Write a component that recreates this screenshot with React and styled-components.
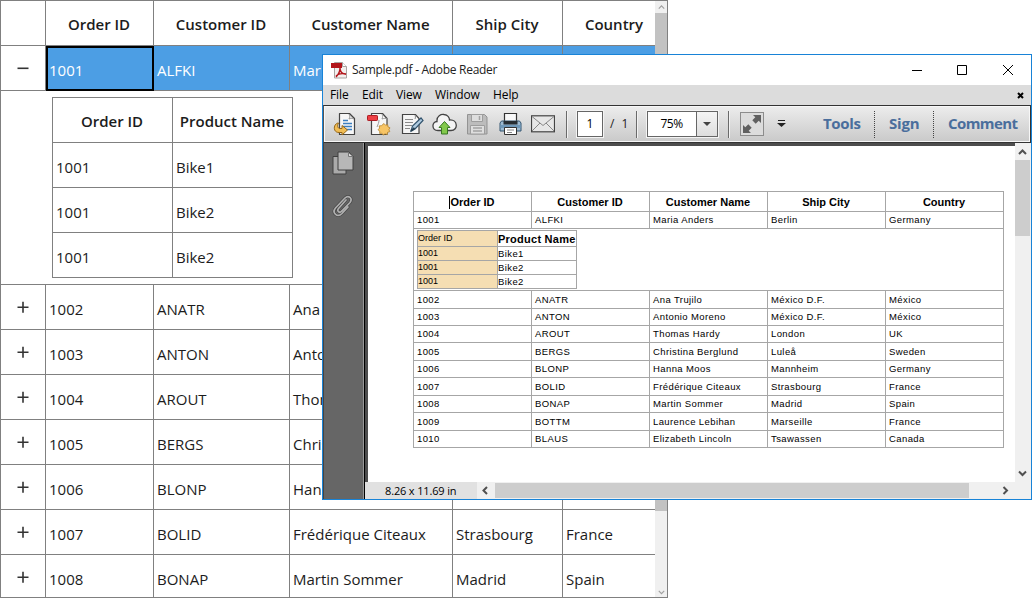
import React from 'react';
import styled, { createGlobalStyle } from 'styled-components';

const Global = createGlobalStyle`
  * { box-sizing: border-box; }
  body { margin: 0; background: #fff; overflow: hidden; }
`;

const Screen = styled.div`
  position: relative;
  width: 1032px;
  height: 598px;
  overflow: hidden;
  font-family: 'Open Sans', sans-serif;
  color: #1c1c1c;
  white-space: nowrap;
`;

const Label = styled.span`
  display: block;
  line-height: 1.15;
  letter-spacing: ${(p) => p.$ls || 0}px;
`;

/* ---------- Data grid ---------- */

const Grid = styled.section`
  display: flex;
  width: 668px;
  height: 598px;
  border: 1px solid #808080;
`;

const GridBody = styled.div`
  width: 654px;
  height: 596px;
  overflow: hidden;
`;

const GridRow = styled.div`
  display: grid;
  grid-template-columns: 45px 108px 136px 163px 110px 92px;
  height: 45px;
`;

const GridCell = styled.div`
  display: flex;
  align-items: center;
  padding: 6px 0 0 3px;
  border-right: 1px solid #808080;
  border-bottom: 1px solid #808080;
  overflow: hidden;
  font-size: 15px;
  background: ${(p) => (p.$selected ? '#4c9ee4' : '#fff')};
  color: ${(p) => (p.$selected ? '#fff' : '#1c1c1c')};
  &:last-child { border-right-width: ${(p) => (p.$nested ? 1 : 0)}px; }
`;

const FocusCell = styled(GridCell)`
  padding: 5px 0 0 1px;
  border: 2px solid #000;
`;

const HeadCell = styled(GridCell)`
  justify-content: center;
  padding: 4px 1px 0 ${(p) => p.$shift || 0}px;
  font-weight: 600;
`;

const ToggleCell = styled(GridCell)`
  justify-content: center;
  padding: 0 1px 0 0;
`;

const Detail = styled.div`
  height: 194px;
  padding: 6px 0 0 51px;
  border-bottom: 1px solid #808080;
`;

const NestedGrid = styled.div`
  width: 241px;
  border: 1px solid #808080;
  border-width: 1px 0 0 1px;
`;

const NestedRow = styled.div`
  display: grid;
  grid-template-columns: 120px 120px;
  height: 45px;
`;

const GridScroll = styled.div`
  display: flex;
  flex-direction: column;
  align-items: center;
  justify-content: space-between;
  width: 12px;
  background: #f0f0f0;
  padding: 3px 0 1px;
`;

const GridThumb = styled.div`
  width: 12px;
  height: 498px;
  margin: 2px 0 auto;
  background: #c2c2c2;
`;

/* ---------- Reader window ---------- */

const Window = styled.section`
  position: absolute;
  left: 322px;
  top: 54px;
  width: 710px;
  height: 446px;
  display: flex;
  flex-direction: column;
  border: 1px solid #1883d7;
  background: #fff;
`;

const TitleBar = styled.header`
  display: flex;
  align-items: center;
  height: 30px;
  padding: 0 17px 0 8px;
  font-size: 12px;
  color: #222;
`;

const Title = styled(Label)`
  flex: 1;
  padding: 0 0 0 4px;
`;

const WindowButtons = styled.div`
  display: flex;
  gap: 34px;
`;

const MenuBar = styled.nav`
  display: grid;
  grid-template-columns: 32px 34px 39px 58px 1fr 9px;
  align-items: center;
  height: 20px;
  padding: 0 5px 0 7px;
  background: #dcdcdc;
  font-size: 12px;
  color: #000;
`;

const Toolbar = styled.div`
  display: grid;
  grid-template-columns: 34px 34px 31px 35px 32px 32px 35px 11px 26px 33px 11px 81px 12px 37px 46px 51px 59px 1fr;
  align-items: center;
  height: 38px;
  padding-left: 9px;
  border: 1px solid #333;
  border-left-color: #555;
  box-shadow: inset 0 0 0 1px #f7f7f7;
  background: linear-gradient(#ededed, #c9c9c9);
`;

const Separator = styled.i`
  width: 2px;
  height: 27px;
  border-left: 1px solid #6a6a6a;
  border-right: 1px solid #f2f2f2;
`;

const PageInput = styled.div`
  display: flex;
  align-items: center;
  justify-content: center;
  width: 26px;
  height: 26px;
  border: 1px solid #666;
  outline: 1px solid #f4f4f4;
  background: #fff;
  font-size: 12px;
  color: #000;
`;

const PageTotal = styled.div`
  display: flex;
  gap: 7px;
  padding-left: 7px;
  font-size: 12px;
  color: #222;
`;

const ZoomBox = styled.div`
  display: grid;
  grid-template-columns: 48px 21px;
  width: 71px;
  height: 26px;
  border: 1px solid #666;
  outline: 1px solid #f4f4f4;
  background: #fff;
`;

const ZoomValue = styled.span`
  align-self: center;
  padding: 0 1px 1px 0;
  text-align: center;
  font-size: 12px;
  letter-spacing: -0.5px;
  color: #000;
`;

const ZoomArrow = styled.span`
  display: flex;
  align-items: center;
  justify-content: center;
  border-left: 1px solid #666;
  background: linear-gradient(#f5f5f5, #dedede);
`;

const Pane = styled.div`
  display: flex;
  align-items: center;
  height: 27px;
  padding: 0 0 1px ${(p) => p.$pad || 0}px;
  border-left: ${(p) => (p.$pad ? '1px dotted #444' : '0')};
  font-size: 15px;
  font-weight: 700;
  color: #4a6e9c;
`;

const Main = styled.div`
  flex: 1;
  display: flex;
  min-height: 0;
`;

const Sidebar = styled.aside`
  display: flex;
  flex-direction: column;
  align-items: center;
  gap: 19px;
  width: 42px;
  padding: 8px 3px 0 0;
  border-left: 1px solid #444;
  border-right: 1px solid #000;
  background: #666;
  box-shadow: inset -1px 0 #999;
`;

const Viewer = styled.div`
  flex: 1;
  display: flex;
  flex-direction: column;
`;

const DocArea = styled.div`
  flex: 1;
  display: flex;
`;

const Page = styled.div`
  flex: 1;
  border: 3px solid #4d4d4d;
  border-width: 3px 0 0 3px;
  padding: 45px 0 0 45px;
  background: #fff;
`;

const VScroll = styled.div`
  display: flex;
  flex-direction: column;
  align-items: center;
  width: 16px;
  padding: 5px 1px 4px 0;
  background: #f0f0f0;
`;

const VThumb = styled.div`
  width: 15px;
  height: 76px;
  margin: 3px 0 auto;
  background: #cdcdcd;
`;

const StatusBar = styled.footer`
  display: flex;
  align-items: center;
  height: 17px;
  background: #f0f0f0;
`;

const PageSize = styled.div`
  display: flex;
  align-items: center;
  width: 112px;
  height: 17px;
  margin-right: 4px;
  padding: 2px 0 0 20px;
  background: #e1e1e1;
  font-size: 11px;
  color: #000;
`;

const HThumb = styled.div`
  width: 474px;
  height: 15px;
  margin: 0 32px 0 5px;
  background: #cdcdcd;
`;

const PdfTable = styled.div`
  width: 591px;
  border: 1px solid #a6a6a6;
  border-width: 1px 0 0 1px;
  font-family: 'Liberation Sans', sans-serif;
  color: #000;
`;

const PdfRow = styled.div`
  display: grid;
  grid-template-columns: repeat(5, 118px);
  height: ${(p) => p.$h}px;
`;

const PdfCell = styled.div`
  display: flex;
  align-items: center;
  justify-content: ${(p) => (p.$head ? 'center' : 'flex-start')};
  padding: ${(p) => (p.$head ? '1px 1px 0 0' : '1px 0 0 3px')};
  border-right: 1px solid #a6a6a6;
  border-bottom: 1px solid #a6a6a6;
  font-size: ${(p) => (p.$head ? 11 : 9.5)}px;
  font-weight: ${(p) => (p.$head ? 700 : 400)};
`;

const PdfDetail = styled.div`
  height: 62px;
  padding: 1px 0 0 3px;
  border-right: 1px solid #a6a6a6;
  border-bottom: 1px solid #a6a6a6;
`;

const PdfNested = styled.div`
  width: 160px;
  border: 1px solid #a6a6a6;
  border-width: 1px 0 0 1px;
`;

const PdfNestedRow = styled.div`
  display: grid;
  grid-template-columns: 80px 79px;
  height: ${(p) => p.$h}px;
`;

const PdfNestedCell = styled.div`
  display: flex;
  align-items: center;
  padding: ${(p) => (p.$head ? '1px 0 0 0' : p.$key ? '0 0 1px 0' : '2px 0 0 0')};
  border-right: 1px solid #a6a6a6;
  border-bottom: 1px solid #a6a6a6;
  background: ${(p) => (p.$key ? '#f5deb3' : '#fff')};
  font-size: ${(p) => (p.$head ? 11 : p.$key ? 9 : 9.5)}px;
  font-weight: ${(p) => (p.$head ? 700 : 400)};
`;

const HeadFirst = styled.span`
  border-left: 1px solid #000;
  line-height: 13px;
`;

/* ---------- Icons ---------- */

const Toggle = ({ open }) => (
  <svg width="12" height="12" viewBox="0 0 12 12" stroke="#333" strokeWidth="1.6">
    <path d={open ? 'M0.5 6.3H11.5' : 'M0.5 6.3H11.5M6 0.8V11.800'} />
  </svg>
);

const chevrons = {
  up: 'M1 6L4.5 2.5L8 6',
  down: 'M1 2.5L4.5 6L8 2.5',
  left: 'M6 1L2.5 4.5L6 8',
  right: 'M2.5 1L6 4.5L2.5 8',
};

const Chevron = ({ dir, color = '#505050', w = 2, size = 9 }) => (
  <svg width={size} height={size} viewBox="0 0 9 9" fill="none" stroke={color} strokeWidth={w}>
    <path d={chevrons[dir]} />
  </svg>
);

const PdfLogo = () => (
  <svg width="17" height="17" viewBox="0 0 17 17">
    <path d="M3.5 .5h8l4 4v11.5h-12z" fill="#f3f0ee" stroke="#a9a3a0" />
    <path d="M11.5 .5v4h4" fill="#fff" stroke="#a9a3a0" />
    <rect x="0" y="1" width="11" height="5" fill="#b3161b" />
    <path d="M5 15c2-2 4-6 4-9 0 4 3 6 6 6.300M5 14c3-3 6-3 10-2" fill="none" stroke="#b3161b" strokeWidth="1.4" />
  </svg>
);

const OpenIcon = () => (
  <svg width="24" height="24" viewBox="0 0 24 24">
    <path d="M6.500 1.500h10l5 5v16h-15z" fill="#f7f7f7" stroke="#444" strokeWidth="1.2" strokeLinejoin="round" />
    <path d="M16 2c.8 2 .8 3 0 5 2-.8 3.500-.8 5 0z" fill="#ddd" stroke="#888" strokeWidth=".8" />
    <path d="M10 8.500h5M10 11.500h9M10 14.500h9M12 17.500h7" stroke="#3d7fc0" strokeWidth="1.300" />
    <path d="M5.500 11C.5 11-.8 20.500 6 20.500H9V23l5.500-5-5.500-4.500V16.500H7C4.500 16.500 4 13.500 5.500 11z" fill="#f0bd55" stroke="#94661a" />
  </svg>
);

const CreateIcon = () => (
  <svg width="24" height="24" viewBox="0 0 24 24">
    <path d="M4.500 1.500h11l4.500 5v16H4.500z" fill="#f7f7f7" stroke="#444" strokeWidth="1.2" strokeLinejoin="round" />
    <path d="M15 2c.8 2 .8 3 0 5 2-.8 3.500-.8 5 0M10 15c1-3 2-4 2-7" fill="none" stroke="#999" />
    <rect x=".5" y="3.500" width="10" height="5" rx=".7" fill="#ed4045" stroke="#ad1d24" />
    <path d="M17 11.500l1.500 1.700 2.200-.5.3 2.200 2 .9-1.100 1.900.9 1.900-2.200.7-.4 2.200-2.200-.7-1.800 1.300-1.300-1.900-2.200.3.100-2.300-1.800-1.500 1.600-1.600-.5-2.200 2.300-.2z" fill="#f7c566" stroke="#b5832c" strokeWidth=".8" />
  </svg>
);

const EditIcon = () => (
  <svg width="23" height="24" viewBox="0 0 23 24">
    <path d="M1.500 2.500h13l3.500 4v15H1.500z" fill="#f5f5f5" stroke="#444" strokeWidth="1.2" />
    <path d="M14 3c.6 1.500.6 2.500 0 4M4 7.500h8M4 10.500h8M4 13.500h7M4 16.500h5" fill="none" stroke="#8a8a8a" />
    <path d="M10 19l1.500-5 8.500-8 2 2.500-8 8.500z" fill="#b0cbe0" stroke="#32536d" strokeWidth="1.2" />
    <path d="M10 19l3.500-3" stroke="#263e50" strokeWidth="2" />
  </svg>
);

const CloudIcon = () => (
  <svg width="25" height="24" viewBox="0 0 25 24">
    <path d="M6 18.500C-.8 18.500-.3 9.500 5 9.500 4.500 4 9 2 12 2.500c4 .5 5.500 3.500 5.500 5.500 8.500-.7 9 10.500 1.500 10.500z" fill="#f4f4f4" stroke="#444" strokeWidth="1.300" />
    <path d="M12.500 9.500l5.500 6h-2.500v6.500h-6V15.500H7z" fill="#82c84b" stroke="#377822" />
  </svg>
);

const SaveIcon = () => (
  <svg width="21" height="22" viewBox="0 0 21 22">
    <path d="M.5 1.500h17l2.500 2.500v17H.5z" fill="#bcbcbc" stroke="#939393" />
    <path d="M4.500 1.500h11v7h-11zM3.500 12.500h14v8.500h-14z" fill="#dedede" stroke="#9d9d9d" />
    <path d="M12.500 3v4M6 15h9M6 18h9" stroke="#a3a3a3" strokeWidth="1.500" />
  </svg>
);

const PrintIcon = () => (
  <svg width="23" height="24" viewBox="0 0 23 24">
    <path d="M5.500 10V1.500h12V10" fill="#f8f8f8" stroke="#333" strokeWidth="1.200" />
    <path d="M2.500 9h18l1.500 2v8H1v-8z" fill="#9cbad2" stroke="#335570" />
    <path d="M4.500 9h14v3.500h-14z" fill="#272e34" />
    <path d="M1.500 13h20v3h-20z" fill="#6e98ba" />
    <path d="M5.500 15.500h12v7h-12z" fill="#fff" stroke="#333" />
    <path d="M8 18h7M8 20.500h5" stroke="#888" />
  </svg>
);

const MailIcon = () => (
  <svg width="24" height="18" viewBox="0 0 24 18">
    <rect x=".5" y=".8" width="23" height="16" fill="#e7e7e7" stroke="#444" strokeWidth="1.200" />
    <path d="M1 1.500l11 9 11-9M1 16l8-8M23 16l-8-8" fill="none" stroke="#888" />
  </svg>
);

const FullIcon = () => (
  <svg width="24" height="24" viewBox="0 0 24 24">
    <rect x=".5" y=".5" width="23" height="23" fill="#dcdcdc" stroke="#8c8c8c" />
    <path d="M13 3h8v8l-2.300-2.300-3 3-3.400-3.400 3-3zM3 13v8h8l-2.300-2.300 3-3-3.400-3.400-3 3z" fill="#606060" />
  </svg>
);

const PagesIcon = () => (
  <svg width="22" height="24" viewBox="0 0 22 24">
    <path d="M1 5.500h13V23H1z" fill="#aaa" stroke="#404040" />
    <path d="M6 1h11l4 4v14H6z" fill="#b7b7b7" stroke="#404040" />
    <path d="M16.500 1.500v4H21z" fill="#ddd" stroke="#777" />
  </svg>
);

const ClipIcon = () => (
  <svg width="22" height="24" viewBox="0 0 22 24" fill="none" strokeLinecap="round">
    <path d="M14 6L6.500 14.500c-2 2.500 1 5 3 2.800L18 8.500c3-4-1.500-8-5-4.500L3.500 14c-4 5.200 2 10 6.500 5.500l6-6.500" stroke="#444" strokeWidth="3" />
    <path d="M14 6L6.500 14.500c-2 2.500 1 5 3 2.800L18 8.500c3-4-1.500-8-5-4.500L3.500 14c-4 5.200 2 10 6.500 5.500l6-6.500" stroke="#b0b0b0" strokeWidth="1.700" />
  </svg>
);

/* ---------- Content ---------- */

const heads = ['Order ID', 'Customer ID', 'Customer Name', 'Ship City', 'Country'];

const orders = [
  ['1001', 'ALFKI', 'Maria Anders', 'Berlin', 'Germany'],
  ['1002', 'ANATR', 'Ana Trujilo', 'México D.F.', 'México'],
  ['1003', 'ANTON', 'Antonio Moreno', 'México D.F.', 'México'],
  ['1004', 'AROUT', 'Thomas Hardy', 'London', 'UK'],
  ['1005', 'BERGS', 'Christina Berglund', 'Luleå', 'Sweden'],
  ['1006', 'BLONP', 'Hanna Moos', 'Mannheim', 'Germany'],
  ['1007', 'BOLID', 'Frédérique Citeaux', 'Strasbourg', 'France'],
  ['1008', 'BONAP', 'Martin Sommer', 'Madrid', 'Spain'],
  ['1009', 'BOTTM', 'Laurence Lebihan', 'Marseille', 'France'],
  ['1010', 'BLAUS', 'Elizabeth Lincoln', 'Tsawassen', 'Canada'],
];

const products = [['1001', 'Bike1'], ['1001', 'Bike2'], ['1001', 'Bike2']];
const pdfHeights = [18, 17, 17, 18, 17, 18, 17, 18, 17];

function OrderGrid() {
  return (
    <Grid>
      <GridBody>
        <GridRow>
          <ToggleCell />
          {heads.map((h, i) => (
            <HeadCell key={h} $shift={i === 4 ? 11 : 0}><Label>{h}</Label></HeadCell>
          ))}
        </GridRow>
        <GridRow>
          <ToggleCell><Toggle open /></ToggleCell>
          <FocusCell $selected><Label>1001</Label></FocusCell>
          {orders[0].slice(1).map((v) => <GridCell key={v} $selected><Label>{v}</Label></GridCell>)}
        </GridRow>
        <Detail>
          <NestedGrid>
            <NestedRow>
              <HeadCell $nested><Label>Order ID</Label></HeadCell>
              <HeadCell $nested><Label>Product Name</Label></HeadCell>
            </NestedRow>
            {products.map((p, i) => (
              <NestedRow key={i}>
                {p.map((v) => <GridCell key={v} $nested><Label>{v}</Label></GridCell>)}
              </NestedRow>
            ))}
          </NestedGrid>
        </Detail>
        {orders.slice(1, 8).map((row) => (
          <GridRow key={row[0]}>
            <ToggleCell><Toggle /></ToggleCell>
            {row.map((v) => <GridCell key={v}><Label>{v}</Label></GridCell>)}
          </GridRow>
        ))}
      </GridBody>
      <GridScroll>
        <Chevron dir="up" color="#a0a0a0" w={1.5} size={7} />
        <GridThumb />
        <Chevron dir="down" color="#a0a0a0" w={1.5} size={7} />
      </GridScroll>
    </Grid>
  );
}

function PdfContent() {
  return (
    <PdfTable>
      <PdfRow $h={20}>
        {heads.map((h, i) => (
          <PdfCell key={h} $head>{i ? <Label>{h}</Label> : <HeadFirst>{h}</HeadFirst>}</PdfCell>
        ))}
      </PdfRow>
      <PdfRow $h={17}>
        {orders[0].map((v) => <PdfCell key={v}><Label $ls={0.4}>{v}</Label></PdfCell>)}
      </PdfRow>
      <PdfDetail>
        <PdfNested>
          <PdfNestedRow $h={16}>
            <PdfNestedCell $key><Label>Order ID</Label></PdfNestedCell>
            <PdfNestedCell $head><Label $ls={0.25}>Product Name</Label></PdfNestedCell>
          </PdfNestedRow>
          {products.map((p, i) => (
            <PdfNestedRow key={i} $h={14}>
              <PdfNestedCell $key><Label>{p[0]}</Label></PdfNestedCell>
              <PdfNestedCell><Label $ls={0.4}>{p[1]}</Label></PdfNestedCell>
            </PdfNestedRow>
          ))}
        </PdfNested>
      </PdfDetail>
      {orders.slice(1).map((row, i) => (
        <PdfRow key={row[0]} $h={pdfHeights[i]}>
          {row.map((v) => <PdfCell key={v}><Label $ls={0.4}>{v}</Label></PdfCell>)}
        </PdfRow>
      ))}
    </PdfTable>
  );
}

function Reader() {
  return (
    <Window>
      <TitleBar>
        <PdfLogo />
        <Title $ls={-0.3}>Sample.pdf - Adobe Reader</Title>
        <WindowButtons>
          <svg width="12" height="12"><path d="M2 6.500h10" stroke="#000" /></svg>
          <svg width="12" height="12"><path d="M1.500 1.500h9v9h-9z" fill="none" stroke="#000" /></svg>
          <svg width="12" height="12"><path d="M1 1l10 10M11 1L1 11" stroke="#000" /></svg>
        </WindowButtons>
      </TitleBar>
      <MenuBar>
        {['File', 'Edit', 'View', 'Window', 'Help'].map((m) => <Label key={m} $ls={-0.1}>{m}</Label>)}
        <svg width="7" height="7"><path d="M1 1l5 5M6 1L1 6" stroke="#000" strokeWidth="2" /></svg>
      </MenuBar>
      <Toolbar>
        <OpenIcon />
        <CreateIcon />
        <EditIcon />
        <CloudIcon />
        <SaveIcon />
        <PrintIcon />
        <MailIcon />
        <Separator />
        <PageInput><Label>1</Label></PageInput>
        <PageTotal><Label>/</Label><Label>1</Label></PageTotal>
        <Separator />
        <ZoomBox>
          <ZoomValue>75%</ZoomValue>
          <ZoomArrow><svg width="8" height="4"><path d="M0 0h8L4 4z" fill="#444" /></svg></ZoomArrow>
        </ZoomBox>
        <Separator />
        <FullIcon />
        <svg width="9" height="8"><path d="M1 .5h7" stroke="#222" /><path d="M0 3h9L4.500 7z" fill="#222" /></svg>
        <Pane><Label $ls={-0.35}>Tools</Label></Pane>
        <Pane $pad={14}><Label $ls={-0.2}>Sign</Label></Pane>
        <Pane $pad={14}><Label $ls={-0.6}>Comment</Label></Pane>
      </Toolbar>
      <Main>
        <Sidebar>
          <PagesIcon />
          <ClipIcon />
        </Sidebar>
        <Viewer>
          <DocArea>
            <Page><PdfContent /></Page>
            <VScroll>
              <Chevron dir="up" />
              <VThumb />
              <Chevron dir="down" />
            </VScroll>
          </DocArea>
          <StatusBar>
            <PageSize><Label $ls={-0.15}>8.26 x 11.69 in</Label></PageSize>
            <Chevron dir="left" />
            <HThumb />
            <Chevron dir="right" />
          </StatusBar>
        </Viewer>
      </Main>
    </Window>
  );
}

export default function App() {
  return (
    <Screen>
      <Global />
      <OrderGrid />
      <Reader />
    </Screen>
  );
}
